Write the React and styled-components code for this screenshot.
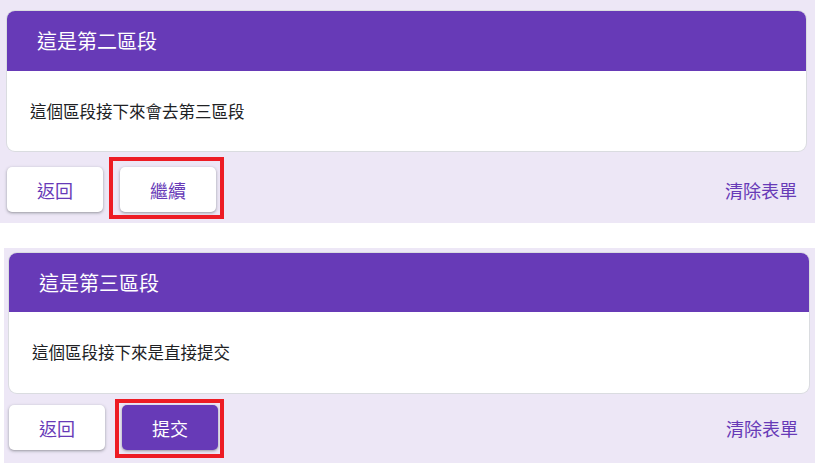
import React from 'react';
import styled, { createGlobalStyle } from 'styled-components';

const GlobalStyle = createGlobalStyle`
  html, body {
    margin: 0;
    padding: 0;
    background: #ffffff;
    font-family: "Noto Sans CJK TC", "Noto Sans", sans-serif;
  }
`;

const Page = styled.div`
  width: 815px;
  height: 463px;
  overflow: hidden;
  display: flex;
  flex-direction: column;
  gap: 25px;
`;

const Panel = styled.section`
  background: #ede7f6;
  margin-left: ${(p) => p.$offset}px;
  padding: ${(p) => p.$pad};
  display: flex;
  flex-direction: column;
  gap: ${(p) => p.$gap}px;
`;

const Card = styled.div`
  background: #ffffff;
  border-radius: 8px;
  overflow: hidden;
  box-shadow: 0 0 0 1px #dadce0;
`;

const Header = styled.div`
  background: #673ab7;
  height: ${(p) => p.$h}px;
  display: flex;
  align-items: center;
  padding-left: 30px;
  color: #ffffff;
  font-size: 20px;
  line-height: 1;
`;

const Body = styled.div`
  height: ${(p) => p.$h}px;
  display: flex;
  align-items: center;
  padding-left: 23px;
  color: #202124;
  font-size: 16.5px;
  line-height: 1;
`;

const Actions = styled.div`
  display: flex;
  align-items: center;
  gap: 17px;
`;

const Button = styled.button`
  width: 96px;
  height: 45px;
  border: none;
  border-radius: 5px;
  background: ${(p) => (p.$primary ? '#673ab7' : '#ffffff')};
  color: ${(p) => (p.$primary ? '#ffffff' : '#673ab7')};
  font-family: inherit;
  font-size: 18px;
  line-height: 1;
  box-shadow: 0 1px 2px rgba(60, 64, 67, 0.3), 0 1px 3px 1px rgba(60, 64, 67, 0.15);
  padding: 0;
`;

const Marked = styled.span`
  position: relative;
  display: inline-flex;

  &::after {
    content: '';
    position: absolute;
    top: -${(p) => p.$t}px;
    right: -${(p) => p.$r}px;
    bottom: -${(p) => p.$b}px;
    left: -${(p) => p.$l}px;
    border: 4px solid #ed1c24;
    pointer-events: none;
  }
`;

const ClearLink = styled.span`
  margin-left: auto;
  margin-right: ${(p) => p.$right}px;
  color: #673ab7;
  font-size: 18px;
  line-height: 1;
`;

function App() {
  return (
    <>
      <GlobalStyle />
      <Page>
        <Panel $offset={0} $pad="11px 9px 11px 7px" $gap={16}>
          <Card>
            <Header $h={60}>這是第二區段</Header>
            <Body $h={80}>這個區段接下來會去第三區段</Body>
          </Card>
          <Actions>
            <Button>返回</Button>
            <Marked $t={10} $r={8} $b={7} $l={11}>
              <Button>繼續</Button>
            </Marked>
            <ClearLink $right={9}>清除表單</ClearLink>
          </Actions>
        </Panel>
        <Panel $offset={4} $pad="5px 6px 13px 5px" $gap={12}>
          <Card>
            <Header $h={59}>這是第三區段</Header>
            <Body $h={81}>這個區段接下來是直接提交</Body>
          </Card>
          <Actions>
            <Button>返回</Button>
            <Marked $t={6} $r={6} $b={8} $l={7}>
              <Button $primary>提交</Button>
            </Marked>
            <ClearLink $right={11}>清除表單</ClearLink>
          </Actions>
        </Panel>
      </Page>
    </>
  );
}

export default App;
